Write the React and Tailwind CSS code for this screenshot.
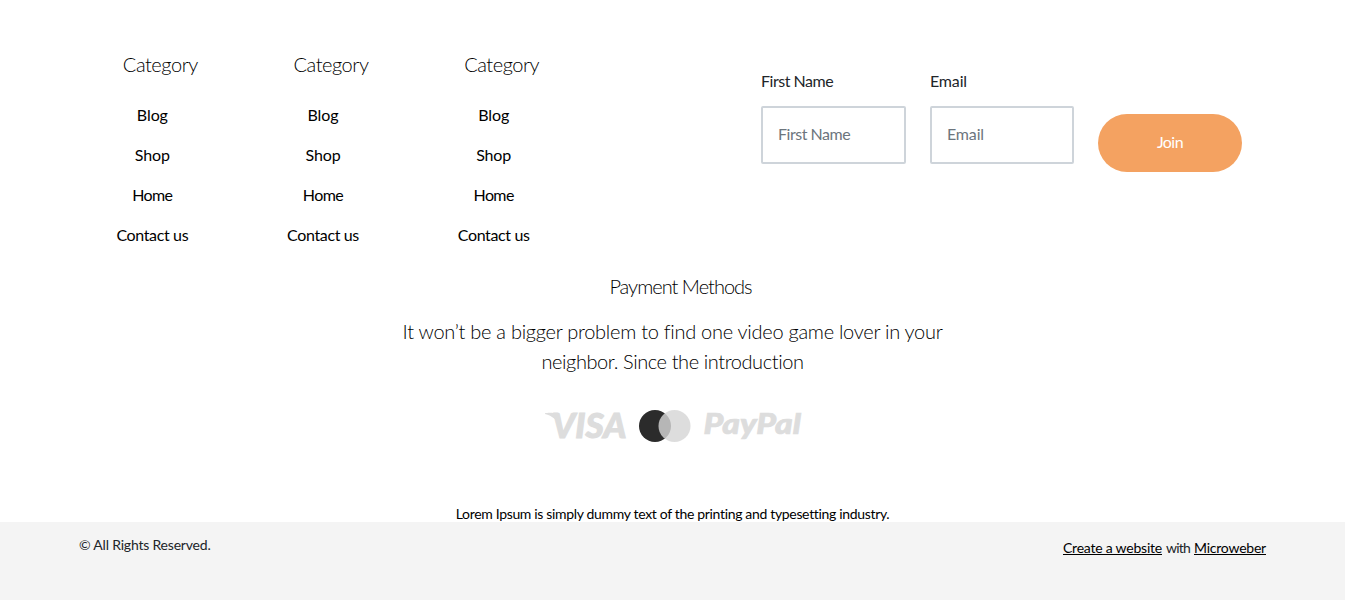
const links = [
  { label: "Blog", spacing: "tracking-[-0.08px]" },
  { label: "Shop", spacing: "tracking-[-0.12px]" },
  { label: "Home", spacing: "tracking-[-0.6px]" },
  { label: "Contact us", spacing: "tracking-[-0.36px]" },
];

function LinkColumn() {
  return (
    <div className="text-center">
      <h6 className="pl-4 text-[20px] font-light leading-[30px] tracking-[-0.46px]">Category</h6>
      <ul className="mt-6 flex flex-col gap-4">
        {links.map((link) => (
          <li key={link.label} className="leading-6">
            <a href="#" className={link.spacing}>{link.label}</a>
          </li>
        ))}
      </ul>
    </div>
  );
}

function Field({ label, spacing }) {
  return (
    <label className={`block leading-6 text-[#212529] ${spacing}`}>
      {label}
      <input
        type="text"
        placeholder={label}
        className={`mt-[13px] block h-[58px] w-full rounded-[2px] border-2 border-[#ced4da] bg-white px-[15px] pb-[3px] placeholder:text-[#6c757d] ${spacing}`}
      />
    </label>
  );
}

function PaymentLogos() {
  return (
    <svg width="258" height="48" viewBox="0 -7 258 48" className="block overflow-visible" aria-label="Visa, Mastercard, PayPal">
      <path d="M0 4.300C2 3.600 8 3.600 10.500 4.300L17 20C13 11 7 6.800 0 5Z" fill="#ddd" />
      <g fill="#ddd" stroke="#ddd" fontFamily="Lato, sans-serif" fontWeight="900" fontStyle="italic">
        <text x="7" y="29.200" fontSize="34.500" strokeWidth="1" textLength="74.500" lengthAdjust="spacingAndGlyphs">VISA</text>
        <text x="158.500" y="24.500" fontSize="28" strokeWidth="0.7" textLength="97.500" lengthAdjust="spacingAndGlyphs">PayPal</text>
      </g>
      <circle cx="110" cy="17" r="16" fill="#2b2b2b" />
      <circle cx="129.500" cy="17" r="16" fill="#d6d6d6" fillOpacity="0.82" />
    </svg>
  );
}

export default function App() {
  return (
    <div className="flex h-[600px] flex-col overflow-hidden bg-white font-['Lato',sans-serif] text-base text-black">
      <div className="mb-[49px] flex h-[222px] shrink-0 justify-between pl-[67px] pr-[103px] pt-[49px]">
        <div className="grid w-[512px] grid-cols-3">
          <LinkColumn />
          <LinkColumn />
          <LinkColumn />
        </div>
        <form className="grid grid-cols-[145px_144px_144px] items-start gap-6 pt-5">
          <Field label="First Name" spacing="tracking-[-0.48px]" />
          <Field label="Email" spacing="tracking-[-0.16px]" />
          <button type="button" className="mt-[45px] h-[58px] rounded-full bg-[#f4a261] pb-0.5 tracking-[-0.57px] text-white">Join</button>
        </form>
      </div>

      <section className="flex shrink-0 flex-col items-center text-center font-light">
        <h6 className="pl-4 text-[20px] leading-[30px] tracking-[-1px]">Payment Methods</h6>
        <p className="mt-[15px] text-[20px] leading-[30px]">
          <span className="block tracking-[-0.27px]">It won’t be a bigger problem to find one video game lover in your</span>
          <span className="block tracking-[-0.41px]">neighbor. Since the introduction</span>
        </p>
        <div className="mt-[26px] pl-[3px]">
          <PaymentLogos />
        </div>
        <p className="mt-[55px] h-[17px] text-sm font-normal leading-[17px] tracking-[-0.33px]">
          Lorem Ipsum is simply dummy text of the printing and typesetting industry.
        </p>
      </section>

      <footer className="flex flex-1 items-start justify-between bg-[#f4f4f4] px-[79px] pt-3 text-sm leading-[21px] text-[#212529]">
        <p className="tracking-[-0.2px]">© All Rights Reserved.</p>
        <p className="flex gap-1 pt-[3px]">
          <a href="#" className="tracking-[-0.22px] text-black underline">Create a website</a>
          <span className="tracking-[-0.8px]">with</span>
          <a href="#" className="tracking-[-0.22px] text-black underline">Microweber</a>
        </p>
      </footer>
    </div>
  );
}
